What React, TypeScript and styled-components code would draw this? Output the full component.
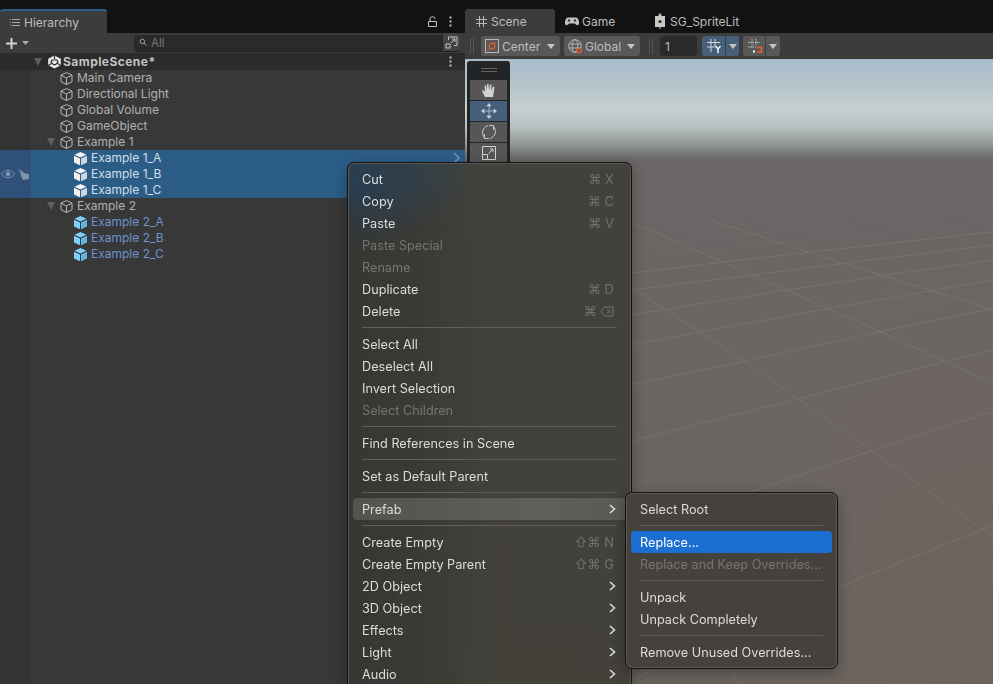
import styled, { createGlobalStyle } from "styled-components";

const GlobalStyle = createGlobalStyle`
  html, body {
    margin: 0;
    padding: 0;
    background: #121212;
    overflow: hidden;
  }
  * {
    box-sizing: border-box;
  }
`;

const Page = styled.div`
  position: relative;
  width: 993px;
  height: 684px;
  display: grid;
  grid-template-columns: 465px 528px;
  overflow: hidden;
  background: #121212;
  font-family: Inter, "Liberation Sans", sans-serif;
  font-size: 12px;
  color: #c4c4c4;
`;

const Pane = styled.div`
  display: flex;
  flex-direction: column;
  min-width: 0;
  height: 684px;
`;

const TabStrip = styled.div`
  height: 33px;
  padding-top: 9px;
  display: flex;
  align-items: stretch;
  background: #121212;
`;

const HierarchyTab = styled.div`
  width: 107px;
  display: flex;
  align-items: center;
  gap: 3px;
  padding-left: 8px;
  background: #3c3c3c;
  border-top: 2px solid #2c5d87;
  border-radius: 3px 3px 0 0;
  color: #bdbdbd;
`;

const StripActions = styled.div`
  margin-left: auto;
  display: flex;
  align-items: center;
  gap: 12px;
  padding-right: 13px;
`;

const SceneTab = styled.div<{ $active?: boolean; $width: number }>`
  width: ${(p) => p.$width}px;
  display: flex;
  align-items: center;
  gap: 3px;
  padding-left: 10px;
  border-radius: 3px 3px 0 0;
  background: ${(p) => (p.$active ? "#3c3c3c" : "transparent")};
  color: #bdbdbd;
`;

const HierarchyBar = styled.div`
  height: 20px;
  display: flex;
  align-items: center;
  padding-left: 5px;
  background: #3c3c3c;
`;

const SearchField = styled.div`
  margin-left: 103px;
  width: 326px;
  height: 17px;
  display: flex;
  align-items: center;
  gap: 3px;
  padding-left: 5px;
  border-radius: 4px;
  background: #2a2a2a;
  border-bottom: 1px solid #212121;
  color: #777;
  font-size: 11.5px;
`;

const SearchExpand = styled.div`
  margin-left: auto;
  width: 18px;
  height: 17px;
  display: flex;
  align-items: center;
  justify-content: center;
  border-left: 1px solid #222;
  border-radius: 0 4px 4px 0;
  background: #454545;
`;

const SceneHeader = styled.div`
  height: 17px;
  display: flex;
  align-items: center;
  padding: 0 13px 0 34px;
  background: #2b2b2b;
  color: #c4c4c4;
  font-size: 12px;
  font-weight: 700;
  letter-spacing: 0.45px;
`;

const Tree = styled.div`
  flex: 1;
  display: flex;
  background: #383838;
`;

const Gutter = styled.div`
  width: 31px;
  background: #333333;
`;

const TreeRows = styled.div`
  flex: 1;
`;

const Row = styled.div<{ $indent: number; $selected?: boolean; $prefab?: boolean }>`
  position: relative;
  height: 16px;
  display: flex;
  align-items: center;
  gap: 3px;
  padding-left: ${(p) => p.$indent}px;
  background: ${(p) => (p.$selected ? "#2c5d87" : "transparent")};
  color: ${(p) => (p.$selected ? "#d2deea" : p.$prefab ? "#6d93cf" : "#b0b0b0")};
`;

const RowLabel = styled.span`
  margin-bottom: 2px;
`;

const GutterIcons = styled.div`
  position: absolute;
  left: -31px;
  top: 0;
  width: 31px;
  height: 16px;
  display: flex;
  align-items: center;
  gap: 2px;
  padding-left: 1px;
  background: #2f5078;
`;

const Foldout = styled.span`
  width: 0;
  height: 0;
  flex-shrink: 0;
  border-left: 4px solid transparent;
  border-right: 4px solid transparent;
  border-top: 8px solid #5e5e5e;
`;

const RowChevron = styled.span`
  position: absolute;
  right: 4px;
  top: 2px;
  display: flex;
`;

const SceneToolbar = styled.div`
  height: 26px;
  display: flex;
  align-items: center;
  padding: 3px 0 3px 5px;
  background: #3c3c3c;
`;

const Grip = styled.span<{ $before?: number }>`
  width: 4px;
  height: 16px;
  margin-left: ${(p) => p.$before ?? 0}px;
  margin-right: 7px;
  border-left: 1px solid #555;
  border-right: 1px solid #555;
`;

const ToolButton = styled.div<{ $width: number; $on?: boolean; $split?: boolean }>`
  width: ${(p) => p.$width}px;
  height: 20px;
  display: flex;
  align-items: center;
  gap: 3px;
  padding-left: 4px;
  margin-right: ${(p) => (p.$split ? "0" : "4px")};
  border-radius: ${(p) => (p.$split ? "3px 0 0 3px" : "3px")};
  background: ${(p) => (p.$on ? "#46607c" : "#585858")};
  color: #bdbdbd;
`;

const DropPart = styled.div<{ $on?: boolean; $width: number }>`
  width: ${(p) => p.$width}px;
  height: 20px;
  display: flex;
  align-items: center;
  justify-content: center;
  margin-right: 4px;
  border-left: 1px solid #3c3c3c;
  border-radius: 0 3px 3px 0;
  background: ${(p) => (p.$on ? "#46607c" : "#585858")};
`;

const Caret = styled.span`
  width: 0;
  height: 0;
  border-left: 4px solid transparent;
  border-right: 4px solid transparent;
  border-top: 5px solid #c4c4c4;
`;

const ButtonCaret = styled(Caret)`
  margin-left: auto;
  margin-right: 5px;
`;

const GridSize = styled.div`
  width: 37px;
  height: 20px;
  display: flex;
  align-items: center;
  padding-left: 5px;
  margin-right: 5px;
  border-radius: 4px;
  background: #2a2a2a;
  color: #bdbdbd;
`;

const Viewport = styled.div`
  position: relative;
  flex: 1;
  background:
    radial-gradient(ellipse 300px 330px at 100% 82%, rgba(122, 96, 86, 0.25), transparent),
    linear-gradient(
      #a9bccb 0,
      #b7c6cc 28px,
      #c5cfce 50px,
      #b8c1c1 68px,
      #959a9a 84px,
      #777676 95px,
      #6b6767 101px,
      #6b6665 160px,
      #6a645f 100%
    );
`;

const GroundLines = styled.svg`
  position: absolute;
  inset: 0;
  width: 100%;
  height: 100%;
`;

const ToolStrip = styled.div`
  position: absolute;
  left: 2px;
  top: 2px;
  width: 43px;
  height: 102px;
  padding: 0 3px;
  display: flex;
  flex-direction: column;
  gap: 1px;
  border-radius: 3px 3px 0 0;
  background: #232426;
`;

const StripHandle = styled.div`
  height: 18px;
  display: flex;
  align-items: center;
  justify-content: center;
  flex-shrink: 0;
`;

const HandleLines = styled.span`
  width: 16px;
  height: 4px;
  border-top: 1px solid #666;
  border-bottom: 1px solid #666;
`;

const StripButton = styled.div<{ $on?: boolean }>`
  height: 20px;
  flex-shrink: 0;
  display: flex;
  align-items: center;
  justify-content: center;
  background: ${(p) => (p.$on ? "#46607c" : "#565656")};
`;

const Menu = styled.div<{ $left: number; $top: number; $width: number; $height?: number }>`
  position: absolute;
  left: ${(p) => p.$left}px;
  top: ${(p) => p.$top}px;
  width: ${(p) => p.$width}px;
  ${(p) => (p.$height ? `height: ${p.$height}px;` : "")}
  padding: 5px;
  border: 1px solid #111;
  border-radius: 7px;
  box-shadow: inset 0 0 0 1px #5d5b58, 0 4px 14px rgba(0, 0, 0, 0.3);
  color: #dedede;
  font-size: 12.7px;
`;

const MainMenu = styled(Menu)`
  border-bottom: none;
  border-radius: 7px 7px 0 0;
  overflow: hidden;
  background:
    radial-gradient(ellipse 120px 70px at 0 16px, rgba(32, 66, 98, 0.65), transparent),
    linear-gradient(90deg, rgba(50, 50, 50, 0.55), transparent 34%),
    rgba(62, 60, 54, 0.88);
  backdrop-filter: blur(22px);
`;

const SubMenu = styled(Menu)`
  background: #45423e;
`;

const Item = styled.div<{ $disabled?: boolean; $active?: boolean; $hover?: boolean }>`
  height: 22px;
  display: flex;
  align-items: center;
  padding: 0 9px;
  border-radius: 4px;
  white-space: nowrap;
  color: ${(p) => (p.$disabled ? "#777571" : p.$active ? "#ffffff" : "#dddcd9")};
  background: ${(p) =>
    p.$active
      ? "#1b6ed2"
      : p.$hover
        ? "linear-gradient(90deg, #53544f, #615f59 70%, #5b5954)"
        : "transparent"};
`;

const Shortcut = styled.span`
  margin-left: auto;
  margin-right: 3px;
  height: 16px;
  display: flex;
  align-items: center;
  gap: 3px;
  color: #74726e;
  font-size: 13px;
  line-height: 1;
`;

const Divider = styled.div`
  height: 1px;
  margin: 5px 9px;
  background: #625f5b;
`;

// grid on the floor, traced from the scene view
const floorLines = [
  "M0 1145 L510 1015 L945 905 L1089 870",
  "M350 1300 L725 1172 L1089 1055",
  "M0 975 L340 905 L750 815 L1089 745",
  "M0 855 L215 815 L600 745 L1089 660",
  "M0 765 L470 690 L770 645 L1089 600",
  "M0 690 L370 645 L640 610 L1089 555",
  "M0 640 L290 605 L1089 515",
  "M0 680 L345 905 L725 1172 L1230 1530",
  "M0 485 L370 645 L750 815 L1089 970",
  "M240 480 L640 610 L900 690 L1089 750",
  "M0 1860 L620 1585 L1089 1395",
  "M300 1825 L330 1875",
];

const farLines = [
  "M0 595 L250 570 L1089 485",
  "M0 555 L1089 455",
  "M0 525 L1089 430",
  "M0 495 L1089 410",
  "M0 465 L1089 390",
  "M0 440 L1089 372",
  "M0 415 L1089 358",
  "M0 390 L1089 345",
  "M0 370 L1089 333",
  "M420 400 L1089 560",
];

const Chevron = ({ color = "#dddcd9", size = 10 }: { color?: string; size?: number }) => (
  <svg width={size} height={size} viewBox="0 0 10 10" style={{ marginLeft: "auto" }}>
    <path d="M3 1 L7.5 5 L3 9" fill="none" stroke={color} strokeWidth="1.6" />
  </svg>
);

const Cube = ({ fill, line }: { fill?: string; line: string }) => (
  <svg width="15" height="15" viewBox="0 0 15 15">
    {fill ? (
      <g>
        <path d="M7.5 1 L13.5 3.8 L7.5 6.6 L1.5 3.8 Z" fill={fill} />
        <path d="M1 4.8 L7 7.6 L7 14.2 L1 11.4 Z" fill={fill} />
        <path d="M14 4.8 L8 7.6 L8 14.2 L14 11.4 Z" fill={line} />
      </g>
    ) : (
      <path
        d="M7.5 1.5 L13 4.2 L13 10.8 L7.5 13.5 L2 10.8 L2 4.2 Z M2 4.2 L7.5 7 L13 4.2 M7.5 7 L7.5 13.5"
        fill="none"
        stroke={line}
        strokeWidth="1"
      />
    )}
  </svg>
);

const PlainCube = () => <Cube line="#b8b8b8" />;

const SceneLogo = () => (
  <svg width="15" height="14" viewBox="0 0 15 14" style={{ marginRight: 1 }}>
    <path d="M7.5 0.5 L13.8 3.8 L13.8 10.2 L7.5 13.5 L1.2 10.2 L1.2 3.8 Z" fill="#ececec" />
    <path
      d="M7.5 0.5 V4 M1.2 10.4 L4.4 8.6 M13.8 10.4 L10.6 8.6 M5 5 H10 L11 7 L8.6 9.6 H6.4 L4 7 Z"
      stroke="#2b2b2b"
      strokeWidth="1.2"
      fill="none"
    />
  </svg>
);

const BackspaceKey = () => (
  <svg width="14" height="11" viewBox="0 0 14 11">
    <path
      d="M4.5 1 H13 V10 H4.5 L0.8 5.5 Z M7 3.5 L10.5 7.5 M10.5 3.5 L7 7.5"
      fill="none"
      stroke="#74726e"
    />
  </svg>
);

const MenuEntry = ({
  label,
  keys,
  disabled,
  sub,
  active,
  hover,
}: {
  label: string;
  keys?: React.ReactNode;
  disabled?: boolean;
  sub?: boolean;
  active?: boolean;
  hover?: boolean;
}) => (
  <Item $disabled={disabled} $active={active} $hover={hover}>
    {label}
    {keys && <Shortcut>{keys}</Shortcut>}
    {sub && <Chevron />}
  </Item>
);

const App = () => {
  return (
    <Page>
      <GlobalStyle />
      <Pane>
        <TabStrip>
          <HierarchyTab>
            <svg width="13" height="13" viewBox="0 0 13 13">
              <path d="M4 3.5 H12 M4 6.5 H12 M4 9.5 H12 M1.5 3.5 H2.5 M2 6 H3 M2 9 H3" stroke="#a8a8a8" fill="none" />
            </svg>
            Hierarchy
          </HierarchyTab>
          <StripActions>
            <svg width="9" height="11" viewBox="0 0 9 11">
              <path d="M0.5 5.5 H8.5 V10.5 H0.5 Z M2 5 V3 C2 0 7 0 7 3" fill="none" stroke="#c4c4c4" />
            </svg>
            <svg width="3" height="11" viewBox="0 0 3 11">
              <path d="M0.5 0.5 h2 v2 h-2 Z M0.5 4.5 h2 v2 h-2 Z M0.5 8.5 h2 v2 h-2 Z" fill="#c4c4c4" />
            </svg>
          </StripActions>
        </TabStrip>
        <HierarchyBar>
          <svg width="13" height="13" viewBox="0 0 13 13">
            <path d="M6.5 1 V12 M1 6.5 H12" stroke="#d0d0d0" strokeWidth="2" />
          </svg>
          <svg width="10" height="6" viewBox="0 0 10 6" style={{ marginLeft: 3 }}>
            <path d="M1 1 H8 L4.5 5 Z" fill="#a8a8a8" />
          </svg>
          <SearchField>
            <svg width="9" height="9" viewBox="0 0 9 9">
              <circle cx="3.4" cy="3.4" r="2.2" fill="none" stroke="#a0a0a0" />
              <path d="M5 5 L7.6 7.6" stroke="#a0a0a0" />
            </svg>
            All
            <SearchExpand>
              <svg width="13" height="13" viewBox="0 0 13 13">
                <path
                  d="M3.5 4 V1 H12 V9.5 H9 M1 8 H5 V12 H1 Z M6 7 L10 3 M7 3 H10 V6"
                  fill="none"
                  stroke="#c4c4c4"
                />
              </svg>
            </SearchExpand>
          </SearchField>
        </HierarchyBar>
        <SceneHeader>
          <Foldout style={{ marginRight: 5 }} />
          <SceneLogo />
          SampleScene*
          <svg width="3" height="11" viewBox="0 0 3 11" style={{ marginLeft: "auto" }}>
            <path d="M0.5 0.5 h2 v2 h-2 Z M0.5 4.5 h2 v2 h-2 Z M0.5 8.5 h2 v2 h-2 Z" fill="#c4c4c4" />
          </svg>
        </SceneHeader>
        <Tree>
          <Gutter />
          <TreeRows>
            <Row $indent={28}><PlainCube /><RowLabel>Main Camera</RowLabel></Row>
            <Row $indent={28}><PlainCube /><RowLabel>Directional Light</RowLabel></Row>
            <Row $indent={28}><PlainCube /><RowLabel>Global Volume</RowLabel></Row>
            <Row $indent={28}><PlainCube /><RowLabel>GameObject</RowLabel></Row>
            <Row $indent={16}><Foldout style={{ marginRight: 1 }} /><PlainCube /><RowLabel>Example 1</RowLabel></Row>
            <Row $indent={42} $selected>
              <GutterIcons />
              <Cube fill="#f0f2f4" line="#cfd6dd" />
              <RowLabel>Example 1_A</RowLabel>
              <RowChevron>
                <svg width="9" height="12" viewBox="0 0 9 12">
                  <path d="M2 1 L7 6 L2 11" fill="none" stroke="#7b9ab8" strokeWidth="1.4" />
                </svg>
              </RowChevron>
            </Row>
            <Row $indent={42} $selected>
              <GutterIcons>
                <svg width="14" height="10" viewBox="0 0 14 10">
                  <path d="M0.5 5 C4 0 10 0 13.5 5 C10 10 4 10 0.5 5 Z" fill="none" stroke="#7d93ac" />
                  <circle cx="7" cy="5" r="2.4" fill="#7d93ac" />
                </svg>
                <svg width="13" height="13" viewBox="0 0 13 13">
                  <path d="M1 1 L5 3 L7 5 L12 6 L12 11 L6 12 L4 8 L3.5 4.5 Z" fill="#7d93ac" />
                </svg>
              </GutterIcons>
              <Cube fill="#f0f2f4" line="#cfd6dd" />
              <RowLabel>Example 1_B</RowLabel>
            </Row>
            <Row $indent={42} $selected>
              <GutterIcons />
              <Cube fill="#f0f2f4" line="#cfd6dd" />
              <RowLabel>Example 1_C</RowLabel>
            </Row>
            <Row $indent={16}><Foldout style={{ marginRight: 1 }} /><PlainCube /><RowLabel>Example 2</RowLabel></Row>
            <Row $indent={42} $prefab><Cube fill="#7fd0fb" line="#5cb6ea" /><RowLabel>Example 2_A</RowLabel></Row>
            <Row $indent={42} $prefab><Cube fill="#7fd0fb" line="#5cb6ea" /><RowLabel>Example 2_B</RowLabel></Row>
            <Row $indent={42} $prefab><Cube fill="#7fd0fb" line="#5cb6ea" /><RowLabel>Example 2_C</RowLabel></Row>
          </TreeRows>
        </Tree>
      </Pane>
      <Pane>
        <TabStrip>
          <SceneTab $active $width={90}>
            <svg width="13" height="13" viewBox="0 0 13 13">
              <path d="M4.5 1 V12 M8.5 1 V12 M1 4.5 H12 M1 8.5 H12" stroke="#b8b8b8" fill="none" />
            </svg>
            Scene
          </SceneTab>
          <SceneTab $width={89}>
            <svg width="14" height="9" viewBox="0 0 14 9">
              <path d="M3.5 0.5 H10.5 C13 0.5 14 3 14 6 C14 8.5 12 9 10 6.5 H4 C2 9 0 8.5 0 6 C0 3 1 0.5 3.5 0.5 Z" fill="#c4c4c4" />
              <circle cx="4" cy="3.5" r="1.2" fill="#3a3a3a" />
              <circle cx="10" cy="3.5" r="1.2" fill="#3a3a3a" />
            </svg>
            Game
          </SceneTab>
          <SceneTab $width={140}>
            <svg width="12" height="16" viewBox="0 0 12 16" style={{ marginRight: 1 }}>
              <path d="M5.5 0 H6.5 V3 H11 V14 H6.5 V16 H5.5 V14 H1 V3 H5.5 Z" fill="#c8c8c8" />
              <path d="M4.5 1.5 H7.5 V3.5 H4.5 Z" fill="#c8c8c8" />
              <circle cx="6" cy="8.5" r="1.6" fill="#2a2a2a" />
            </svg>
            SG_SpriteLit
          </SceneTab>
        </TabStrip>
        <SceneToolbar>
          <Grip />
          <ToolButton $width={79}>
            <svg width="14" height="14" viewBox="0 0 14 14">
              <rect x="0.5" y="0.5" width="13" height="13" fill="none" stroke="#b8b8b8" />
              <path d="M2.5 11.5 L11.5 2.5" stroke="#e25a2b" />
              <circle cx="7" cy="7" r="2.8" fill="#585858" stroke="#e8602e" strokeWidth="1.2" />
            </svg>
            Center
            <ButtonCaret />
          </ToolButton>
          <ToolButton $width={76}>
            <svg width="14" height="15" viewBox="0 0 14 15">
              <circle cx="7" cy="7" r="6.3" fill="none" stroke="#b4b4b4" />
              <ellipse cx="7" cy="7" rx="2.8" ry="6.3" fill="none" stroke="#b4b4b4" />
              <path d="M1 5 H13 M1 9 H13" stroke="#b4b4b4" />
              <circle cx="11" cy="11.5" r="2.2" fill="#555" stroke="#f0622c" strokeWidth="1.2" />
            </svg>
            Global
            <ButtonCaret />
          </ToolButton>
          <Grip $before={5} />
          <GridSize>1</GridSize>
          <ToolButton $width={23} $on $split>
            <svg width="16" height="16" viewBox="0 0 16 16">
              <path d="M5 1 V14 M9 1 V8 M1 4.5 H14 M1 9 H9" stroke="#d0d6dc" fill="none" />
              <path d="M9.5 8 L12 11 L14.5 8 M12 11 V15" stroke="#ffffff" fill="none" strokeWidth="1.4" />
            </svg>
          </ToolButton>
          <DropPart $on $width={14}><Caret /></DropPart>
          <ToolButton $width={22} $split>
            <svg width="16" height="16" viewBox="0 0 16 16">
              <path d="M5 1 V10 M9 1 V8 M1 4.5 H13 M1 9 H9" stroke="#bdbdbd" fill="none" strokeDasharray="1.5 0.8" />
              <path d="M10 9.5 H14.5 V14 H10" fill="none" stroke="#f0622c" strokeWidth="1.7" />
              <rect x="6" y="12.5" width="2" height="2" fill="#fff" />
            </svg>
          </ToolButton>
          <DropPart $width={15}><Caret /></DropPart>
        </SceneToolbar>
        <Viewport>
          <GroundLines viewBox="0 0 528 625">
            <g transform="translate(165 1) scale(0.3333)" fill="none">
              {farLines.map((d) => (
                <path key={d} d={d} stroke="#716c69" strokeWidth="1.6" />
              ))}
              {floorLines.map((d) => (
                <path key={d} d={d} stroke="#7f7a74" strokeWidth="1.8" />
              ))}
            </g>
          </GroundLines>
          <ToolStrip>
            <StripHandle><HandleLines /></StripHandle>
            <StripButton>
              <svg width="15" height="15" viewBox="0 0 15 15">
                <path
                  d="M4 14 L1 8 L2 7 L4 9 L3.5 2.5 L5 2.5 L6 7 L6 1 L7.5 1 L8 7 L9 1.5 L10.5 1.5 L10 7.5 L12 3.5 L13.5 4 L12 14 Z"
                  fill="#d2d2d2"
                />
              </svg>
            </StripButton>
            <StripButton $on>
              <svg width="16" height="16" viewBox="0 0 16 16">
                <path
                  d="M8 3 V13 M3 8 H13 M8 0.5 L10 3 H6 Z M8 15.5 L10 13 H6 Z M0.5 8 L3 6 V10 Z M15.5 8 L13 6 V10 Z"
                  fill="#c6d3e0"
                  stroke="#c6d3e0"
                  strokeWidth="0.7"
                />
              </svg>
            </StripButton>
            <StripButton>
              <svg width="16" height="16" viewBox="0 0 16 16">
                <path
                  d="M4 14.5 C0 10 1 3.5 7 1.5 M12 1.5 C16 6 15 12.5 9 14.5 M3.5 10 V14.5 H8 M12.5 6 V1.5 H8"
                  fill="none"
                  stroke="#c8c8c8"
                />
              </svg>
            </StripButton>
            <StripButton>
              <svg width="14" height="14" viewBox="0 0 14 14">
                <path
                  d="M0.5 8 V0.5 H13.5 V13.5 H6 M0.5 8.5 H5.5 V13.5 H0.5 Z M6.5 7.5 L11 3 M8 3 H11 V6"
                  fill="none"
                  stroke="#d0d0d0"
                />
              </svg>
            </StripButton>
          </ToolStrip>
        </Viewport>
      </Pane>

      <MainMenu $left={347} $top={162} $width={285} $height={530}>
        <MenuEntry label="Cut" keys="⌘ X" />
        <MenuEntry label="Copy" keys="⌘ C" />
        <MenuEntry label="Paste" keys="⌘ V" />
        <MenuEntry label="Paste Special" disabled />
        <MenuEntry label="Rename" disabled />
        <MenuEntry label="Duplicate" keys="⌘ D" />
        <MenuEntry label="Delete" keys={<>⌘<BackspaceKey /></>} />
        <Divider />
        <MenuEntry label="Select All" />
        <MenuEntry label="Deselect All" />
        <MenuEntry label="Invert Selection" />
        <MenuEntry label="Select Children" disabled />
        <Divider />
        <MenuEntry label="Find References in Scene" />
        <Divider />
        <MenuEntry label="Set as Default Parent" />
        <Divider />
        <MenuEntry label="Prefab" sub hover />
        <Divider />
        <MenuEntry label="Create Empty" keys="⇧⌘ N" />
        <MenuEntry label="Create Empty Parent" keys="⇧⌘ G" />
        <MenuEntry label="2D Object" sub />
        <MenuEntry label="3D Object" sub />
        <MenuEntry label="Effects" sub />
        <MenuEntry label="Light" sub />
        <MenuEntry label="Audio" sub />
      </MainMenu>

      <SubMenu $left={625} $top={492} $width={213}>
        <MenuEntry label="Select Root" />
        <Divider />
        <MenuEntry label="Replace..." active />
        <MenuEntry label="Replace and Keep Overrides..." disabled />
        <Divider />
        <MenuEntry label="Unpack" />
        <MenuEntry label="Unpack Completely" />
        <Divider />
        <MenuEntry label="Remove Unused Overrides..." />
      </SubMenu>
    </Page>
  );
};

export default App;
